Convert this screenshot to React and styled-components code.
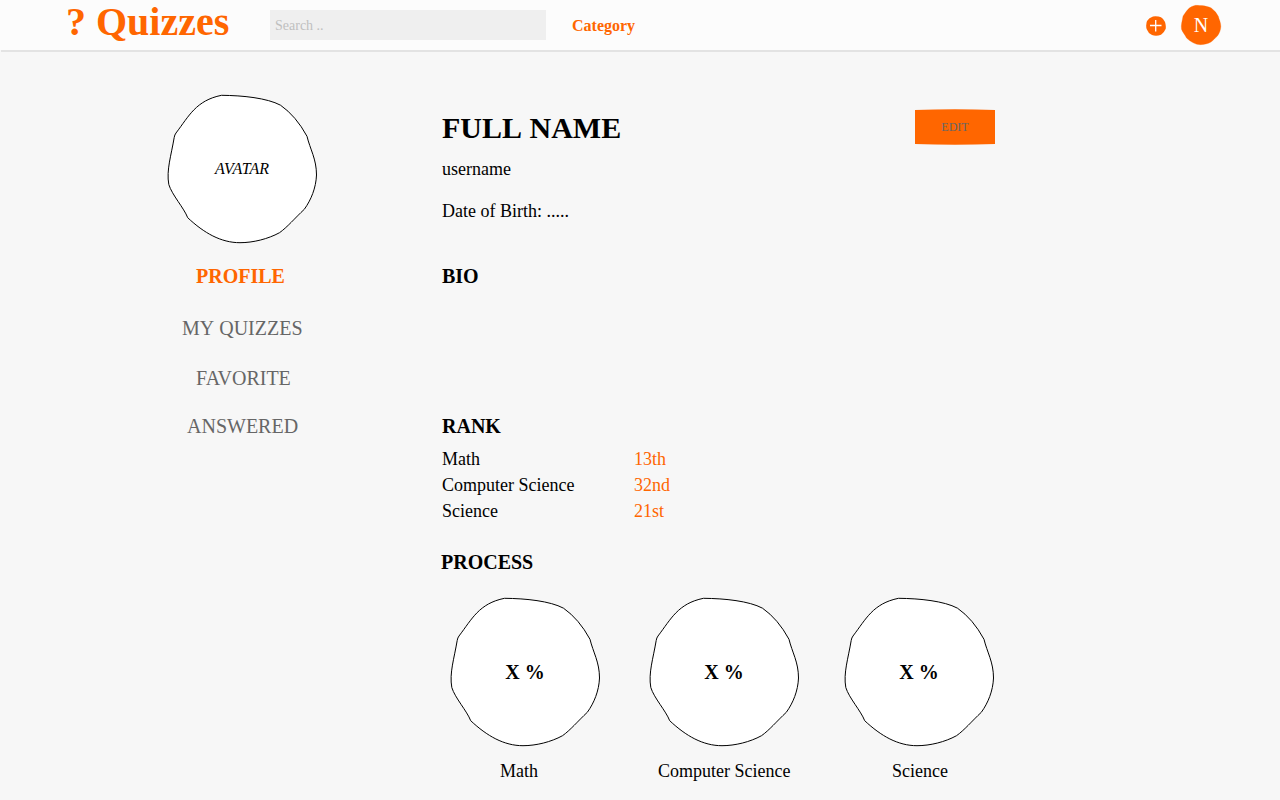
import React from "react";
import styled, { createGlobalStyle } from "styled-components";

const ORANGE = "#ff6600";

const GlobalStyle = createGlobalStyle`
  * { box-sizing: border-box; }
  body {
    margin: 0;
    background: #f7f7f7;
    color: #000;
    font-family: "Liberation Serif", "Times New Roman", serif;
  }
  h1, h2, p, ul { margin: 0; padding: 0; }
`;

const Page = styled.div`
  height: 800px;
  overflow: hidden;
`;

const Header = styled.header`
  display: flex;
  align-items: flex-start;
  height: 52px;
  padding-left: 66px;
  padding-right: 59px;
  background: linear-gradient(#e3e3e3, #e3e3e3) 1px 50px / 100% 2px no-repeat,
    linear-gradient(#fcfcfc, #fcfcfc) 0 0 / 100% 50px no-repeat;
`;

const Logo = styled.div`
  width: 204px;
  color: ${ORANGE};
  font-size: 40px;
  font-weight: bold;
  line-height: 44px;
  white-space: nowrap;
`;

const Search = styled.input`
  width: 276px;
  height: 30px;
  margin-top: 10px;
  padding: 2px 5px 0;
  border: 0;
  border-radius: 0;
  background: #efefef;
  font-family: inherit;
  font-size: 14px;
  &::placeholder { color: #bfbfbf; opacity: 1; }
`;

const CategoryLink = styled.a`
  margin-left: 26px;
  color: ${ORANGE};
  font-size: 16px;
  font-weight: bold;
  line-height: 52px;
`;

const Actions = styled.div`
  display: flex;
  align-items: center;
  gap: 15px;
  height: 50px;
  margin-left: auto;
`;

const AddIcon = styled.svg`
  display: block;
  width: 20px;
  height: 20px;
  margin-top: 2px;
`;

const BlobFrame = styled.div`
  display: grid;
  flex: none;
  width: ${(p) => p.$size}px;
  height: ${(p) => p.$size}px;
  > * { grid-area: 1 / 1; }
`;

const BlobShape = styled.svg`
  display: block;
  width: 100%;
  height: 100%;
  overflow: visible;
`;

const UserInitial = styled.span`
  color: #fff;
  font-size: 20px;
  line-height: 40px;
  text-align: center;
`;

const AvatarLabel = styled.em`
  font-size: 16px;
  line-height: 150px;
  text-align: center;
`;

const Percent = styled.strong`
  font-size: 20px;
  line-height: 150px;
  text-align: center;
`;

const Main = styled.main`
  display: flex;
  padding-left: 167px;
`;

const Sidebar = styled.aside`
  width: 150px;
  padding-top: 42px;
`;

const Menu = styled.ul`
  display: flex;
  flex-direction: column;
  margin-top: 20px;
  list-style: none;
`;

const MenuItem = styled.li`
  height: ${(p) => p.$height}px;
  padding-left: ${(p) => p.$indent}px;
  color: ${(p) => (p.$active ? ORANGE : "#666")};
  font-size: 20px;
  font-weight: ${(p) => (p.$active ? "bold" : "normal")};
  line-height: 24px;
  word-spacing: 0.75px;
  white-space: nowrap;
`;

const Content = styled.section`
  width: 553px;
  margin-left: 125px;
  padding-top: 56px;
`;

const TitleRow = styled.div`
  display: flex;
  align-items: flex-start;
  justify-content: space-between;
  height: 48px;
`;

const FullName = styled.h1`
  font-size: 30px;
  line-height: 40px;
  word-spacing: 1.65px;
`;

const EditButton = styled.button`
  display: grid;
  width: 80px;
  height: 36px;
  margin-top: 1px;
  padding: 0;
  border: 0;
  background: none;
  color: #666;
  font-family: inherit;
  font-size: 12px;
  line-height: 36px;
  > * { grid-area: 1 / 1; }
`;

const Line = styled.p`
  font-size: 18px;
  line-height: 26px;
`;

const BirthLine = styled(Line)`
  margin-top: 16px;
`;

const Heading = styled.h2`
  margin-top: ${(p) => p.$top}px;
  margin-left: ${(p) => p.$shift || 0}px;
  font-size: 20px;
  line-height: 24px;
`;

const Ranks = styled.div`
  display: grid;
  grid-template-columns: 192px auto;
  justify-content: start;
  margin-top: 8px;
`;

const Position = styled(Line)`
  color: ${ORANGE};
`;

const Progress = styled.div`
  display: flex;
  margin: 23px 0 0 8px;
`;

const ProgressItem = styled.div`
  width: ${(p) => p.$width}px;
`;

const Caption = styled(Line)`
  margin-top: 11px;
  padding-left: ${(p) => p.$indent}px;
  white-space: nowrap;
`;

const OUTLINE =
  "M54.5 1.3 C76 1.5 100 4 113.5 11.2 Q129 22 140 42.3 C143 55 149.5 65 149.5 81 C149 94 144 106 137.3 115.3 C128 124 120 133.5 112.5 138.7 C101 145 86 148.7 73 148.7 C54 148.7 37 139 20.7 123.7 C17 114 5 101 1.8 90.5 C-0.8 76 4.3 61 7.2 43.5 Q7.6 40.8 9 39 C22 22 29 6.5 54.5 1.3 Z";

function Blob({ size = 150, fill = "#fff", stroke = "#000", children }) {
  return (
    <BlobFrame $size={size}>
      <BlobShape viewBox="0 0 150 150" aria-hidden="true">
        <path d={OUTLINE} fill={fill} stroke={stroke} strokeWidth="1" />
      </BlobShape>
      {children}
    </BlobFrame>
  );
}

const menu = [
  { label: "PROFILE", indent: 29, height: 52, active: true },
  { label: "MY QUIZZES", indent: 15, height: 50 },
  { label: "FAVORITE", indent: 29, height: 48 },
  { label: "ANSWERED", indent: 20, height: 24 },
];

const ranks = [
  ["Math", "13th"],
  ["Computer Science", "32nd"],
  ["Science", "21st"],
];

const progress = [
  { label: "Math", indent: 50, width: 199 },
  { label: "Computer Science", indent: 9, width: 195 },
  { label: "Science", indent: 48, width: 150 },
];

export default function App() {
  return (
    <Page>
      <GlobalStyle />
      <Header>
        <Logo>? Quizzes</Logo>
        <Search placeholder="Search .." />
        <CategoryLink>Category</CategoryLink>
        <Actions>
          <AddIcon viewBox="0 0 20 20">
            <path
              d="M7 .4 Q12 0 15 1.2 Q18 3 19 6 Q20.3 10 19.6 13 Q18 17 15 18.8 Q10 20.6 6 19 Q2 17 .6 13 Q-.4 9 1 5 Q3 1.5 7 .4Z"
              fill={ORANGE}
            />
            <path d="M4 9.5H15.5M9.7 4V15.5" stroke="#fff" strokeWidth="1.3" />
          </AddIcon>
          <Blob size={40} fill={ORANGE} stroke={ORANGE}>
            <UserInitial>N</UserInitial>
          </Blob>
        </Actions>
      </Header>
      <Main>
        <Sidebar>
          <Blob>
            <AvatarLabel>AVATAR</AvatarLabel>
          </Blob>
          <Menu>
            {menu.map((m) => (
              <MenuItem key={m.label} $indent={m.indent} $height={m.height} $active={m.active}>
                {m.label}
              </MenuItem>
            ))}
          </Menu>
        </Sidebar>
        <Content>
          <TitleRow>
            <FullName>FULL NAME</FullName>
            <EditButton>
              <svg width="80" height="36" viewBox="0 0 80 36" aria-hidden="true">
                <path d="M0 1 Q40 -.4 80 1 V35 Q40 36.4 0 35Z" fill={ORANGE} />
              </svg>
              <span>EDIT</span>
            </EditButton>
          </TitleRow>
          <Line>username</Line>
          <BirthLine>Date of Birth: .....</BirthLine>
          <Heading $top={40}>BIO</Heading>
          <Heading $top={126}>RANK</Heading>
          <Ranks>
            {ranks.map(([subject, place]) => (
              <React.Fragment key={subject}>
                <Line>{subject}</Line>
                <Position>{place}</Position>
              </React.Fragment>
            ))}
          </Ranks>
          <Heading $top={26} $shift={-1}>PROCESS</Heading>
          <Progress>
            {progress.map((p) => (
              <ProgressItem key={p.label} $width={p.width}>
                <Blob>
                  <Percent>X %</Percent>
                </Blob>
                <Caption $indent={p.indent}>{p.label}</Caption>
              </ProgressItem>
            ))}
          </Progress>
        </Content>
      </Main>
    </Page>
  );
}
